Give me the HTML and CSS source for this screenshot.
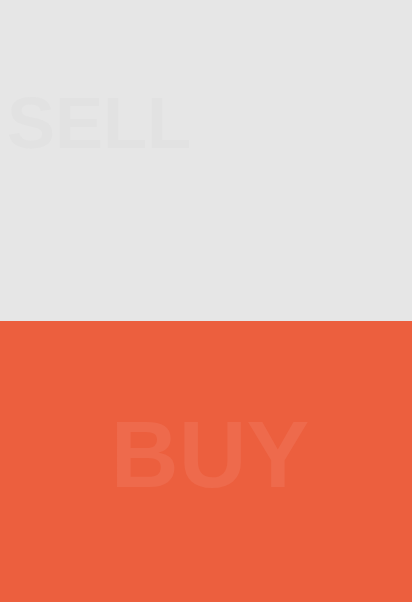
FILE: index.html
```html
<!DOCTYPE html>
<html>
<head>
<meta charset="utf-8">
<link rel="stylesheet" href="styles.css">
</head>
<body>
<div class="screen">
  <section class="panel sell">
    <h1 class="label sell-label">SELL</h1>
  </section>
  <section class="panel buy">
    <h1 class="label buy-label">BUY</h1>
  </section>
</div>
</body>
</html>
```
FILE: styles.css
```css
html, body {
  margin: 0;
  padding: 0;
  height: 100%;
}
body {
  font-family: "Liberation Sans", Arial, sans-serif;
}
.screen {
  display: flex;
  flex-direction: column;
  height: 602px;
}
.panel {
  display: flex;
}
.sell {
  height: 321px;
  background: #e6e6e6;
  padding: 87px 0 0 7px;
  box-sizing: border-box;
  align-items: flex-start;
}
.buy {
  flex: 1;
  background: #ec5f3e;
  justify-content: center;
  align-items: center;
}
.label {
  margin: 0;
  font-weight: bold;
  line-height: 1;
}
.sell-label {
  font-size: 72px;
  color: #e2e2e2;
}
.buy-label {
  font-size: 94px;
  color: #ee6a4c;
  padding: 0 0 14px 8px;
}
```
